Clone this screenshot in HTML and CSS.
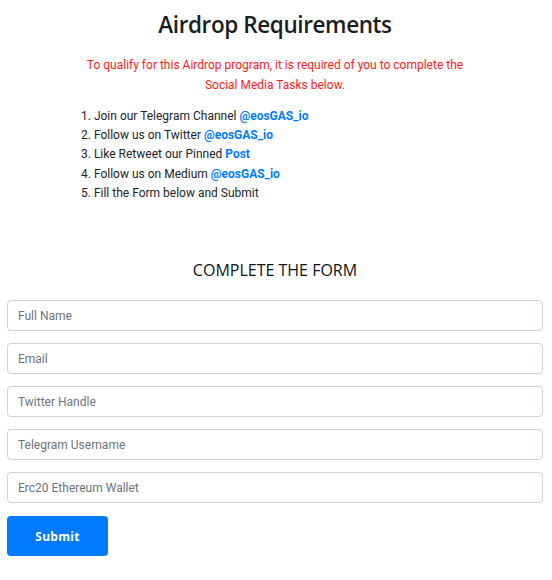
FILE: index.html
```html
<!DOCTYPE html>
<html>
<head>
<meta charset="utf-8">
<link rel="stylesheet" href="styles.css">
</head>
<body>
<div class="page">
  <h1 class="title">Airdrop Requirements</h1>
  <p class="notice">To qualify for this Airdrop program, it is required of you to complete the Social Media Tasks below.</p>
  <ol class="tasks">
    <li>Join our Telegram Channel <a href="#">@eosGAS_io</a></li>
    <li>Follow us on Twitter <a href="#">@eosGAS_io</a></li>
    <li>Like Retweet our Pinned <a href="#">Post</a></li>
    <li>Follow us on Medium <a href="#">@eosGAS_io</a></li>
    <li>Fill the Form below and Submit</li>
  </ol>
  <h2 class="form-title">COMPLETE THE FORM</h2>
  <form class="form">
    <input class="field" type="text" placeholder="Full Name">
    <input class="field" type="text" placeholder="Email">
    <input class="field" type="text" placeholder="Twitter Handle">
    <input class="field" type="text" placeholder="Telegram Username">
    <input class="field" type="text" placeholder="Erc20 Ethereum Wallet">
    <button class="submit" type="button">Submit</button>
  </form>
</div>
</body>
</html>
```
FILE: styles.css
```css
html, body {
  margin: 0;
  padding: 0;
  background: #fff;
}
body {
  font-family: Roboto, "Liberation Sans", sans-serif;
  color: #212529;
}
.page {
  padding: 10px 9px 0 7px;
}
.title {
  margin: 0;
  font-family: "Open Sans", sans-serif;
  font-weight: 600;
  font-size: 22.5px;
  line-height: 29px;
  text-align: center;
  color: #1b1e21;
  letter-spacing: -0.4px;
}
.notice {
  margin: 17px auto 0;
  width: 392px;
  font-size: 12px;
  line-height: 19.5px;
  text-align: center;
  color: #ff1a1a;
}
.tasks {
  margin: 12px 0 0 74px;
  padding: 0;
  list-style: decimal inside;
  font-size: 12px;
  line-height: 19.2px;
}
.tasks a {
  color: #007bff;
  font-weight: 700;
  text-decoration: none;
}
.form-title {
  margin: 58px 0 0;
  font-family: "Open Sans", sans-serif;
  font-weight: 500;
  font-size: 16px;
  line-height: 19px;
  text-align: center;
  color: #111;
}
.form {
  margin-top: 20px;
  display: flex;
  flex-direction: column;
  align-items: flex-start;
}
.field {
  box-sizing: border-box;
  width: 100%;
  height: 31px;
  margin: 0 0 12px;
  padding: 0 10px;
  border: 1px solid #ced4da;
  border-radius: 4px;
  font-family: Roboto, sans-serif;
  font-size: 12px;
  color: #495057;
  background: #fff;
}
.field::placeholder {
  color: #6c757d;
}
.submit {
  margin-top: 1px;
  width: 101px;
  height: 40px;
  border: none;
  border-radius: 4px;
  background: #007bff;
  color: #fff;
  font-family: "Open Sans", sans-serif;
  font-weight: 700;
  font-size: 12px;
  letter-spacing: 0.3px;
}
```
